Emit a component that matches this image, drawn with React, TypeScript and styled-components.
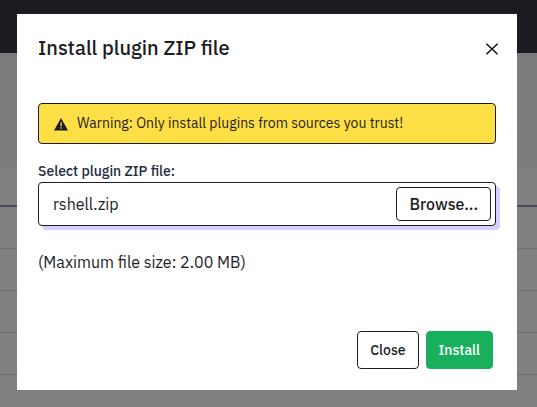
import React, { useRef, useState } from 'react';
import styled, { createGlobalStyle, css } from 'styled-components';

const ink = '#1d1d1f';

const GlobalStyle = createGlobalStyle`
  *, *::before, *::after { box-sizing: border-box; }
  body {
    margin: 0;
    color: ${ink};
    background: #808080;
    font-family: "IBM Plex Sans", Roboto, "Noto Sans", sans-serif;
    font-size: 16px;
    line-height: 24px;
  }
  button, input { font: inherit; color: inherit; }
`;

const Page = styled.div`
  min-height: 100vh;
  overflow: hidden;
`;

const TopBar = styled.header`
  height: 53px;
  background: #1b1b21;
`;

const PageHeading = styled.div`
  height: 114px;
  background: #7b7b7b;
`;

const ListHeader = styled.div`
  height: 40px;
  border-bottom: 2px solid #4b4b59;
`;

const ListRow = styled.div`
  height: 42px;
  border-bottom: 1px solid #6b6b71;
`;

const Overlay = styled.div`
  position: fixed;
  inset: 0;
  overflow: auto;
  padding: 14px 20px 17px 17px;
`;

const Dialog = styled.section`
  display: flex;
  flex-direction: column;
  padding: 20px 21px 21px;
  background: #fff;
`;

const DialogHeader = styled.header`
  display: flex;
  align-items: center;
  justify-content: space-between;
  margin-bottom: 41px;
`;

const Title = styled.h1`
  margin: 0;
  font-size: 20px;
  font-weight: 500;
  line-height: 28px;
`;

const IconButton = styled.button`
  display: flex;
  padding: 6px 4px 4px;
  margin-right: -7px;
  border: 0;
  background: none;
  cursor: pointer;
`;

const Warning = styled.div`
  display: flex;
  align-items: center;
  gap: 8px;
  padding: 8px 14px;
  margin-bottom: 16px;
  border: 1px solid ${ink};
  border-radius: 4px;
  background: #ffdf46;
  font-size: 14px;
  line-height: 23px;
`;

const Label = styled.label`
  color: #1c2b3f;
  font-size: 14px;
  font-weight: 500;
  line-height: 22px;
`;

const FileField = styled.div`
  display: flex;
  padding: 4px;
  border: 1px solid ${ink};
  border-radius: 4px;
  background: #fff;
  box-shadow: 4px 4px 0 #d9ccff;
`;

const FileName = styled.input`
  flex: 1;
  min-width: 0;
  padding: 0 10px;
  border: 0;
  outline: 0;
  background: none;
`;

const Button = styled.button<{ $size?: 'large'; $primary?: boolean }>`
  padding: 6px 12px;
  border: 1px solid ${ink};
  border-radius: 4px;
  background: #fff;
  font-size: 14px;
  font-weight: 500;
  cursor: pointer;
  ${(p) => p.$size === 'large' && css`
    padding: 4px 12px;
    font-size: 16px;
  `}
  ${(p) => p.$primary && css`
    border-color: #18af5d;
    background: #18af5d;
    color: #fff;
  `}
`;

const Hint = styled.p`
  margin: 24px 0 57px;
`;

const Actions = styled.footer`
  display: flex;
  justify-content: flex-end;
  gap: 7px;
  padding-right: 3px;
`;

const CloseIcon = () => (
  <svg width="14" height="14" viewBox="0 0 14 14" fill="none" stroke="#111" strokeWidth="1.5" aria-hidden="true">
    <path d="M1.4 1.7 12.6 12.3M12.6 1.7 1.4 12.3" />
  </svg>
);

const WarningIcon = () => (
  <svg width="16" height="16" viewBox="0 0 16 16" aria-hidden="true">
    <path d="M8 2 15 14.5H1Z" fill={ink} />
    <path d="M7.4 6.2h1.3v4H7.4zM7.4 11.3h1.3v1.4H7.4z" fill="#ffdf46" />
  </svg>
);

export default function App() {
  const picker = useRef<HTMLInputElement>(null);
  const [fileName, setFileName] = useState('rshell.zip');

  return (
    <>
      <GlobalStyle />
      <Page aria-hidden="true">
        <TopBar />
        <PageHeading />
        <ListHeader />
        {[0, 1, 2, 3].map((row) => <ListRow key={row} />)}
      </Page>
      <Overlay>
        <Dialog role="dialog" aria-modal="true" aria-labelledby="dialog-title">
          <DialogHeader>
            <Title id="dialog-title">Install plugin ZIP file</Title>
            <IconButton type="button" aria-label="Close dialog"><CloseIcon /></IconButton>
          </DialogHeader>
          <Warning role="alert">
            <WarningIcon />
            <span>Warning: Only install plugins from sources you trust!</span>
          </Warning>
          <Label htmlFor="plugin-file">Select plugin ZIP file:</Label>
          <FileField>
            <FileName id="plugin-file" type="text" readOnly value={fileName} />
            <input
              ref={picker}
              type="file"
              accept=".zip"
              hidden
              aria-label="Plugin ZIP file"
              onChange={(e) => setFileName(e.target.files?.[0]?.name ?? fileName)}
            />
            <Button type="button" $size="large" onClick={() => picker.current?.click()}>Browse...</Button>
          </FileField>
          <Hint>(Maximum file size: 2.00 MB)</Hint>
          <Actions>
            <Button type="button">Close</Button>
            <Button type="button" $primary>Install</Button>
          </Actions>
        </Dialog>
      </Overlay>
    </>
  );
}
